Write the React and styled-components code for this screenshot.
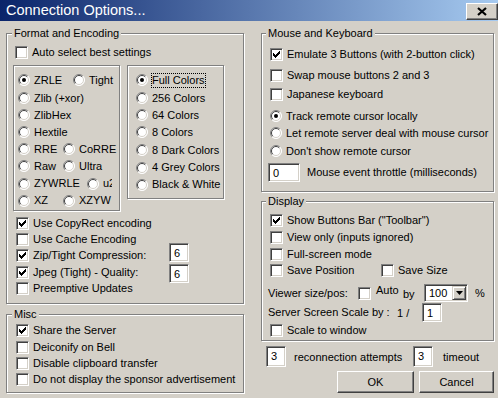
import React from "react";
import styled, { createGlobalStyle } from "styled-components";

const Global = createGlobalStyle`
  html, body { margin: 0; padding: 0; background: #d4d0c8; overflow: hidden; }
  body { font-family: "Liberation Sans", Arial, sans-serif; font-size: 11px; color: #000; }
`;

const Window = styled.div`
  width: 498px;
  height: 398px;
  background: #d4d0c8;
  display: flex;
  flex-direction: column;
  overflow: hidden;
`;

const TitleBar = styled.div`
  flex: 0 0 21px;
  height: 21px;
  display: flex;
  align-items: center;
  justify-content: space-between;
  padding-left: 6px;
  background: linear-gradient(to right, #0a246a, #a6caf0);
`;

const TitleText = styled.div`
  color: #fff;
  font-size: 14.5px;
  line-height: 21px;
  white-space: nowrap;
`;

const CloseButton = styled.div`
  width: 32px;
  height: 17px;
  box-sizing: border-box;
  margin-top: 2px;
  background: #d4d0c8;
  border: 1px solid;
  border-color: #fff #404040 #404040 #fff;
  box-shadow: inset -1px -1px #808080;
  display: flex;
  align-items: center;
  justify-content: center;
`;

const Body = styled.div`
  display: grid;
  grid-template-columns: 238px 233px;
  column-gap: 17px;
  padding: 6px 0 0 6px;
`;

const Column = styled.div`
  display: flex;
  flex-direction: column;
`;

const Group = styled.fieldset`
  margin: ${(p) => p.mt || 0}px 0 0 0;
  padding: 0;
  min-width: 0;
  border: 1px solid #808080;
  box-shadow: inset 1px 1px #fff, 1px 1px #fff;
`;

const Legend = styled.legend`
  padding: 0 2px;
  margin-left: ${(p) => p.ml}px;
  line-height: 13px;
  background: #d4d0c8;
`;

const GroupBody = styled.div`
  display: flex;
  flex-direction: column;
  padding: ${(p) => `${p.pt}px 0 ${p.pb}px ${p.pl}px`};
`;

const Row = styled.div`
  display: flex;
  align-items: center;
  flex: none;
  height: ${(p) => p.h || 16}px;
  margin-top: ${(p) => p.mt || 0}px;
  margin-left: ${(p) => p.ml || 0}px;
`;

const Item = styled.label`
  display: inline-flex;
  align-items: center;
  gap: 4px;
  flex: none;
  white-space: nowrap;
  width: ${(p) => (p.w ? `${p.w}px` : "auto")};
  overflow: ${(p) => (p.clip ? "hidden" : "visible")};
`;

const Text = styled.span`
  line-height: 13px;
  white-space: nowrap;
  border: 1px ${(p) => (p.focus ? "dotted #000" : "solid transparent")};
  margin: 0 -1px;
`;

const Cell = styled.span`
  flex: none;
  line-height: 13px;
  white-space: nowrap;
  width: ${(p) => (p.w ? `${p.w}px` : "auto")};
  margin-left: ${(p) => p.ml || 0}px;
  align-self: ${(p) => (p.top ? "flex-start" : "center")};
  padding-top: ${(p) => p.pt || 0}px;
`;

const CheckBox = styled.span`
  flex: 0 0 13px;
  width: 13px;
  height: 13px;
  box-sizing: border-box;
  background: #fff;
  border: 1px solid;
  border-color: #808080 #fff #fff #808080;
  box-shadow: inset 1px 1px #404040, inset -1px -1px #d4d0c8;
  display: flex;
  align-items: center;
  justify-content: center;
  margin-left: ${(p) => p.ml || 0}px;
`;

const RadioSvg = styled.svg`
  flex: 0 0 12px;
  display: block;
`;

const CHECK_PATH =
  "M6 0h1v1h-1z M5 1h2v1h-2z M0 2h1v1h-1z M4 2h3v1h-3z M0 3h2v1h-2z M3 3h3v1h-3z M0 4h5v1h-5z M1 5h3v1h-3z M2 6h1v1h-1z";

const Check = ({ checked, ml }) => (
  <CheckBox ml={ml}>
    {checked && (
      <svg width="7" height="7" viewBox="0 0 7 7" shapeRendering="crispEdges">
        <path d={CHECK_PATH} fill="#000" />
      </svg>
    )}
  </CheckBox>
);

const Radio = ({ checked }) => (
  <RadioSvg width="12" height="12" viewBox="0 0 12 12">
    <circle cx="6" cy="6" r="5.5" fill="#fff" />
    <path d="M2.1 9.9 A5.5 5.5 0 0 1 9.9 2.1" fill="none" stroke="#808080" strokeWidth="1" />
    <path d="M2.8 9.2 A4.5 4.5 0 0 1 9.2 2.8" fill="none" stroke="#404040" strokeWidth="1" />
    <path d="M9.9 2.1 A5.5 5.5 0 0 1 2.1 9.9" fill="none" stroke="#ffffff" strokeWidth="1" />
    <path d="M9.2 2.8 A4.5 4.5 0 0 1 2.8 9.2" fill="none" stroke="#d4d0c8" strokeWidth="1" />
    {checked && <circle cx="6" cy="6" r="2" fill="#000" />}
  </RadioSvg>
);

const CheckItem = ({ checked, children, w }) => (
  <Item w={w}>
    <Check checked={checked} />
    <Text>{children}</Text>
  </Item>
);

const RadioItem = ({ checked, children, w, focus, clip }) => (
  <Item w={w} clip={clip}>
    <Radio checked={checked} />
    <Text focus={focus}>{children}</Text>
  </Item>
);

const NumBox = styled.div`
  flex: none;
  box-sizing: border-box;
  width: ${(p) => p.w}px;
  height: ${(p) => p.h}px;
  background: #fff;
  border: 1px solid;
  border-color: #808080 #fff #fff #808080;
  box-shadow: inset 1px 1px #404040, inset -1px -1px #d4d0c8;
  padding: 3px 0 0 4px;
  line-height: 13px;
  font-size: 11px;
  margin-left: ${(p) => p.ml || 0}px;
  margin-top: ${(p) => p.mtop || 0}px;
  margin-bottom: ${(p) => p.mbot || 0}px;
`;

const SubBoxes = styled.div`
  display: flex;
  align-items: flex-start;
  gap: 7px;
  margin: 5px 0 0 -2px;
`;

const SubBox = styled.div`
  box-sizing: border-box;
  width: ${(p) => p.w}px;
  height: ${(p) => p.h}px;
  border: 1px solid #808080;
  box-shadow: inset 1px 1px #fff, 1px 1px #fff;
  padding: 5px 0 0 ${(p) => p.pl}px;
  display: grid;
  grid-template-rows: ${(p) => p.rows};
  align-content: start;
  overflow: hidden;
`;

const BoxLine = styled.div`
  display: flex;
  align-items: center;
`;

const Select = styled.div`
  flex: none;
  box-sizing: border-box;
  width: 44px;
  height: 18px;
  background: #fff;
  border: 1px solid;
  border-color: #808080 #fff #fff #808080;
  box-shadow: inset 1px 1px #404040, inset -1px -1px #d4d0c8;
  display: flex;
  align-items: stretch;
  padding: 1px;
`;

const SelectValue = styled.span`
  flex: 1;
  padding: 1px 0 0 3px;
  line-height: 13px;
`;

const SelectArrow = styled.span`
  flex: 0 0 14px;
  box-sizing: border-box;
  background: #d4d0c8;
  border: 1px solid;
  border-color: #d4d0c8 #404040 #404040 #d4d0c8;
  box-shadow: inset 1px 1px #fff, inset -1px -1px #808080;
  display: flex;
  align-items: center;
  justify-content: center;
`;

const BottomRow = styled.div`
  display: flex;
  align-items: flex-start;
  margin: 5px 0 0 5px;
`;

const ButtonRow = styled.div`
  display: flex;
  justify-content: flex-end;
  gap: 5px;
  margin-top: 4px;
`;

const Button = styled.div`
  box-sizing: border-box;
  width: ${(p) => p.w}px;
  height: 22px;
  background: #d4d0c8;
  border: 1px solid;
  border-color: #fff #404040 #404040 #fff;
  box-shadow: inset -1px -1px #808080;
  display: flex;
  align-items: center;
  justify-content: center;
  line-height: 13px;
`;

export default function App() {
  return (
    <>
      <Global />
      <Window>
        <TitleBar>
          <TitleText>Connection Options...</TitleText>
          <CloseButton>
            <svg width="10" height="9" viewBox="0 0 10 9">
              <path d="M1 1 L9 8 M9 1 L1 8" stroke="#000" strokeWidth="2.2" />
            </svg>
          </CloseButton>
        </TitleBar>
        <Body>
          <Column>
            <Group>
              <Legend ml={5}>Format and Encoding</Legend>
              <GroupBody pt={4} pb={7} pl={8}>
                <Row>
                  <CheckItem>Auto select best settings</CheckItem>
                </Row>
                <SubBoxes>
                  <SubBox w={107} h={146} pl={4} rows="18px 18px 16px 18px 16px 18px 17px 17px">
                    <BoxLine>
                      <RadioItem checked w={55}>ZRLE</RadioItem>
                      <RadioItem>Tight</RadioItem>
                    </BoxLine>
                    <BoxLine>
                      <RadioItem>Zlib (+xor)</RadioItem>
                    </BoxLine>
                    <BoxLine>
                      <RadioItem>ZlibHex</RadioItem>
                    </BoxLine>
                    <BoxLine>
                      <RadioItem>Hextile</RadioItem>
                    </BoxLine>
                    <BoxLine>
                      <RadioItem w={45}>RRE</RadioItem>
                      <RadioItem>CoRRE</RadioItem>
                    </BoxLine>
                    <BoxLine>
                      <RadioItem w={45}>Raw</RadioItem>
                      <RadioItem>Ultra</RadioItem>
                    </BoxLine>
                    <BoxLine>
                      <RadioItem w={69}>ZYWRLE</RadioItem>
                      <RadioItem w={25} clip>u2</RadioItem>
                    </BoxLine>
                    <BoxLine>
                      <RadioItem w={45}>XZ</RadioItem>
                      <RadioItem>XZYW</RadioItem>
                    </BoxLine>
                  </SubBox>
                  <SubBox w={97} h={134} pl={8} rows="18px 18px 16px 18px 18px 17px 17px">
                    <BoxLine>
                      <RadioItem checked focus>Full Colors</RadioItem>
                    </BoxLine>
                    <BoxLine>
                      <RadioItem>256 Colors</RadioItem>
                    </BoxLine>
                    <BoxLine>
                      <RadioItem>64 Colors</RadioItem>
                    </BoxLine>
                    <BoxLine>
                      <RadioItem>8 Colors</RadioItem>
                    </BoxLine>
                    <BoxLine>
                      <RadioItem>8 Dark Colors</RadioItem>
                    </BoxLine>
                    <BoxLine>
                      <RadioItem>4 Grey Colors</RadioItem>
                    </BoxLine>
                    <BoxLine>
                      <RadioItem>Black &amp; White</RadioItem>
                    </BoxLine>
                  </SubBox>
                </SubBoxes>
                <Row mt={4} ml={1}>
                  <CheckItem checked>Use CopyRect encoding</CheckItem>
                </Row>
                <Row ml={1}>
                  <CheckItem>Use Cache Encoding</CheckItem>
                </Row>
                <Row ml={1} h={17}>
                  <CheckItem checked w={153}>Zip/Tight Compression:</CheckItem>
                  <NumBox w={20} h={19} mbot={7}>6</NumBox>
                </Row>
                <Row ml={1}>
                  <CheckItem checked w={153}>Jpeg (Tight) - Quality:</CheckItem>
                  <NumBox w={20} h={19} mtop={3}>6</NumBox>
                </Row>
                <Row ml={1}>
                  <CheckItem>Preemptive Updates</CheckItem>
                </Row>
              </GroupBody>
            </Group>
            <Group mt={4}>
              <Legend ml={5}>Misc</Legend>
              <GroupBody pt={1} pb={5} pl={9}>
                <Row h={17}>
                  <CheckItem checked>Share the Server</CheckItem>
                </Row>
                <Row>
                  <CheckItem>Deiconify on Bell</CheckItem>
                </Row>
                <Row>
                  <CheckItem>Disable clipboard transfer</CheckItem>
                </Row>
                <Row>
                  <CheckItem>Do not display the sponsor advertisement</CheckItem>
                </Row>
              </GroupBody>
            </Group>
          </Column>

          <Column>
            <Group>
              <Legend ml={4}>Mouse and Keyboard</Legend>
              <GroupBody pt={0} pb={9} pl={8}>
                <Row mt={6}>
                  <CheckItem checked>Emulate 3 Buttons (with 2-button click)</CheckItem>
                </Row>
                <Row mt={5}>
                  <CheckItem>Swap mouse buttons 2 and 3</CheckItem>
                </Row>
                <Row mt={3}>
                  <CheckItem>Japanese keyboard</CheckItem>
                </Row>
                <Row mt={6}>
                  <RadioItem checked>Track remote cursor locally</RadioItem>
                </Row>
                <Row mt={1}>
                  <RadioItem>Let remote server deal with mouse cursor</RadioItem>
                </Row>
                <Row mt={2}>
                  <RadioItem>Don't show remote cursor</RadioItem>
                </Row>
                <Row mt={4} h={19} ml={-2}>
                  <NumBox w={32} h={19}>0</NumBox>
                  <Cell ml={7}>Mouse event throttle (milliseconds)</Cell>
                </Row>
              </GroupBody>
            </Group>
            <Group mt={3}>
              <Legend ml={4}>Display</Legend>
              <GroupBody pt={0} pb={2} pl={8}>
                <Row mt={4}>
                  <CheckItem checked>Show Buttons Bar ("Toolbar")</CheckItem>
                </Row>
                <Row mt={1}>
                  <CheckItem>View only (inputs ignored)</CheckItem>
                </Row>
                <Row mt={1}>
                  <CheckItem>Full-screen mode</CheckItem>
                </Row>
                <Row>
                  <CheckItem w={111}>Save Position</CheckItem>
                  <CheckItem>Save Size</CheckItem>
                </Row>
                <Row mt={6} h={18} ml={-2}>
                  <Cell w={90}>Viewer size/pos:</Cell>
                  <Check />
                  <Cell w={27} ml={5} top>Auto</Cell>
                  <Cell w={21} pt={2}>by</Cell>
                  <Select>
                    <SelectValue>100</SelectValue>
                    <SelectArrow>
                      <svg width="7" height="4" viewBox="0 0 7 4">
                        <path d="M0 0h7L3.5 4z" fill="#000" />
                      </svg>
                    </SelectArrow>
                  </Select>
                  <Cell ml={7}>%</Cell>
                </Row>
                <Row mt={1} h={18} ml={-2}>
                  <Cell w={129}>Server Screen Scale by :</Cell>
                  <Cell w={25} pt={2}>1 /</Cell>
                  <NumBox w={20} h={19}>1</NumBox>
                </Row>
                <Row mt={1}>
                  <CheckItem>Scale to window</CheckItem>
                </Row>
              </GroupBody>
            </Group>
            <BottomRow>
              <NumBox w={20} h={21}>3</NumBox>
              <Cell w={119} ml={8} pt={1}>reconnection attempts</Cell>
              <NumBox w={20} h={21}>3</NumBox>
              <Cell ml={10} pt={1}>timeout</Cell>
            </BottomRow>
            <ButtonRow>
              <Button w={77}>OK</Button>
              <Button w={75}>Cancel</Button>
            </ButtonRow>
          </Column>
        </Body>
      </Window>
    </>
  );
}
